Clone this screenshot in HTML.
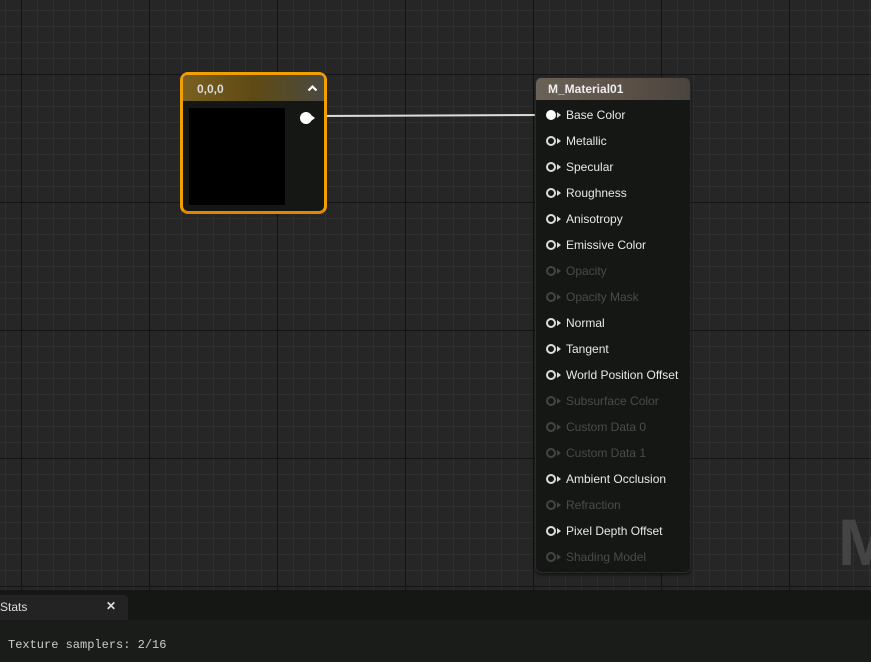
<!DOCTYPE html><html><head><style>
*{margin:0;padding:0;box-sizing:border-box}
body{width:871px;height:662px;overflow:hidden;background:#262626;font-family:"Liberation Sans",sans-serif;position:relative}
#grid{position:absolute;left:0;top:0;width:871px;height:590px;
background-color:#262626;
background-image:
linear-gradient(90deg,#141414 1px,transparent 1px),
linear-gradient(#141414 1px,transparent 1px),
linear-gradient(90deg,#2f2f2f 1px,transparent 1px),
linear-gradient(#2f2f2f 1px,transparent 1px);
background-size:128px 128px,128px 128px,16px 16px,16px 16px;
background-position:21px 74px,21px 74px,5px 10px,5px 10px}
.bigM{position:absolute;left:838px;top:504px;font-size:66px;font-weight:bold;color:#444}
#n1{position:absolute;left:180px;top:72px;width:147px;height:142px;border:3px solid #f0a000;border-radius:8px;background:#151715;border-bottom-color:#e08800}
#n1 .h{height:26px;background:linear-gradient(90deg,#7a6020,#5e4a14 50%,#4a4a42);color:#ddd;font-size:12px;font-weight:bold;padding:7px 0 0 14px;border-radius:4px 4px 0 0}
#n1 .sw{position:absolute;left:6px;top:33px;width:96px;height:97px;background:#000}
#n2{position:absolute;left:535px;top:77px;width:156px;height:496px;border-radius:6px;background:#151715;border:1px solid #2a2a2a;box-shadow:0 2px 3px #0008}
#n2 .h{height:22px;background:linear-gradient(90deg,#6a6257,#5a5046 60%,#4a4440);color:#eee;font-size:12px;font-weight:bold;padding:4px 0 0 12px;border-radius:5px 5px 0 0}
.r{position:absolute;left:10px;font-size:12px;color:#e8e8e8;height:16px;line-height:16px;padding-left:20px}
.r.d{color:#4a4a4a}
.r i{position:absolute;left:0;top:3px;width:10px;height:10px;border:2px solid #ddd;border-radius:50%}
.r.d i{border-color:#444}
.r.f i{background:#fff;border-color:#fff}
.r b{position:absolute;left:11px;top:5px;border-left:4px solid #ddd;border-top:3px solid transparent;border-bottom:3px solid transparent}
.r.d b{border-left-color:#444}
#bottom{position:absolute;left:0;top:590px;width:871px;height:72px;background:#1a1c1a}
#strip{position:absolute;left:0;top:0;width:871px;height:30px;background:#151715}
#tab{position:absolute;left:0;top:5px;width:128px;height:25px;background:#232323;border-radius:0 4px 0 0;color:#ddd;font-size:12px;padding:5px 0 0 0}
#tab span{position:absolute;left:106px;top:4px;font-weight:bold}
#tx{position:absolute;left:8px;top:48px;font-family:"Liberation Mono",monospace;font-size:12px;color:#ccc}
</style></head><body>
<div id="grid"></div>
<div class="bigM">M</div>
<svg style="position:absolute;left:0;top:0" width="871" height="590"><line x1="312" y1="116" x2="546" y2="115" stroke="#ddd" stroke-width="2"/></svg>
<div id="n1"><div class="h">0,0,0</div>
<svg style="position:absolute;left:124px;top:9px" width="11" height="8"><path d="M1.5 6.5 L5.5 2.5 L9.5 6.5" stroke="#fff" stroke-width="2.2" fill="none"/></svg>
<div class="sw"></div>
<div style="position:absolute;left:117px;top:37px;width:12px;height:12px;background:#fff;border-radius:50%"></div>
<div style="position:absolute;left:128px;top:40px;border-left:4px solid #fff;border-top:3px solid transparent;border-bottom:3px solid transparent"></div></div>
<div id="n2"><div class="h">M_Material01</div>
<div class="r f" style="top:29px"><i></i><b></b>Base Color</div>
<div class="r" style="top:55px"><i></i><b></b>Metallic</div>
<div class="r" style="top:81px"><i></i><b></b>Specular</div>
<div class="r" style="top:107px"><i></i><b></b>Roughness</div>
<div class="r" style="top:133px"><i></i><b></b>Anisotropy</div>
<div class="r" style="top:159px"><i></i><b></b>Emissive Color</div>
<div class="r d" style="top:185px"><i></i><b></b>Opacity</div>
<div class="r d" style="top:211px"><i></i><b></b>Opacity Mask</div>
<div class="r" style="top:237px"><i></i><b></b>Normal</div>
<div class="r" style="top:263px"><i></i><b></b>Tangent</div>
<div class="r" style="top:289px"><i></i><b></b>World Position Offset</div>
<div class="r d" style="top:315px"><i></i><b></b>Subsurface Color</div>
<div class="r d" style="top:341px"><i></i><b></b>Custom Data 0</div>
<div class="r d" style="top:367px"><i></i><b></b>Custom Data 1</div>
<div class="r" style="top:393px"><i></i><b></b>Ambient Occlusion</div>
<div class="r d" style="top:419px"><i></i><b></b>Refraction</div>
<div class="r" style="top:445px"><i></i><b></b>Pixel Depth Offset</div>
<div class="r d" style="top:471px"><i></i><b></b>Shading Model</div>
</div>
<div id="bottom"><div id="strip"><div id="tab">Stats<span>✕</span></div></div>
<div id="tx">Texture samplers: 2/16</div></div>
</body></html>
